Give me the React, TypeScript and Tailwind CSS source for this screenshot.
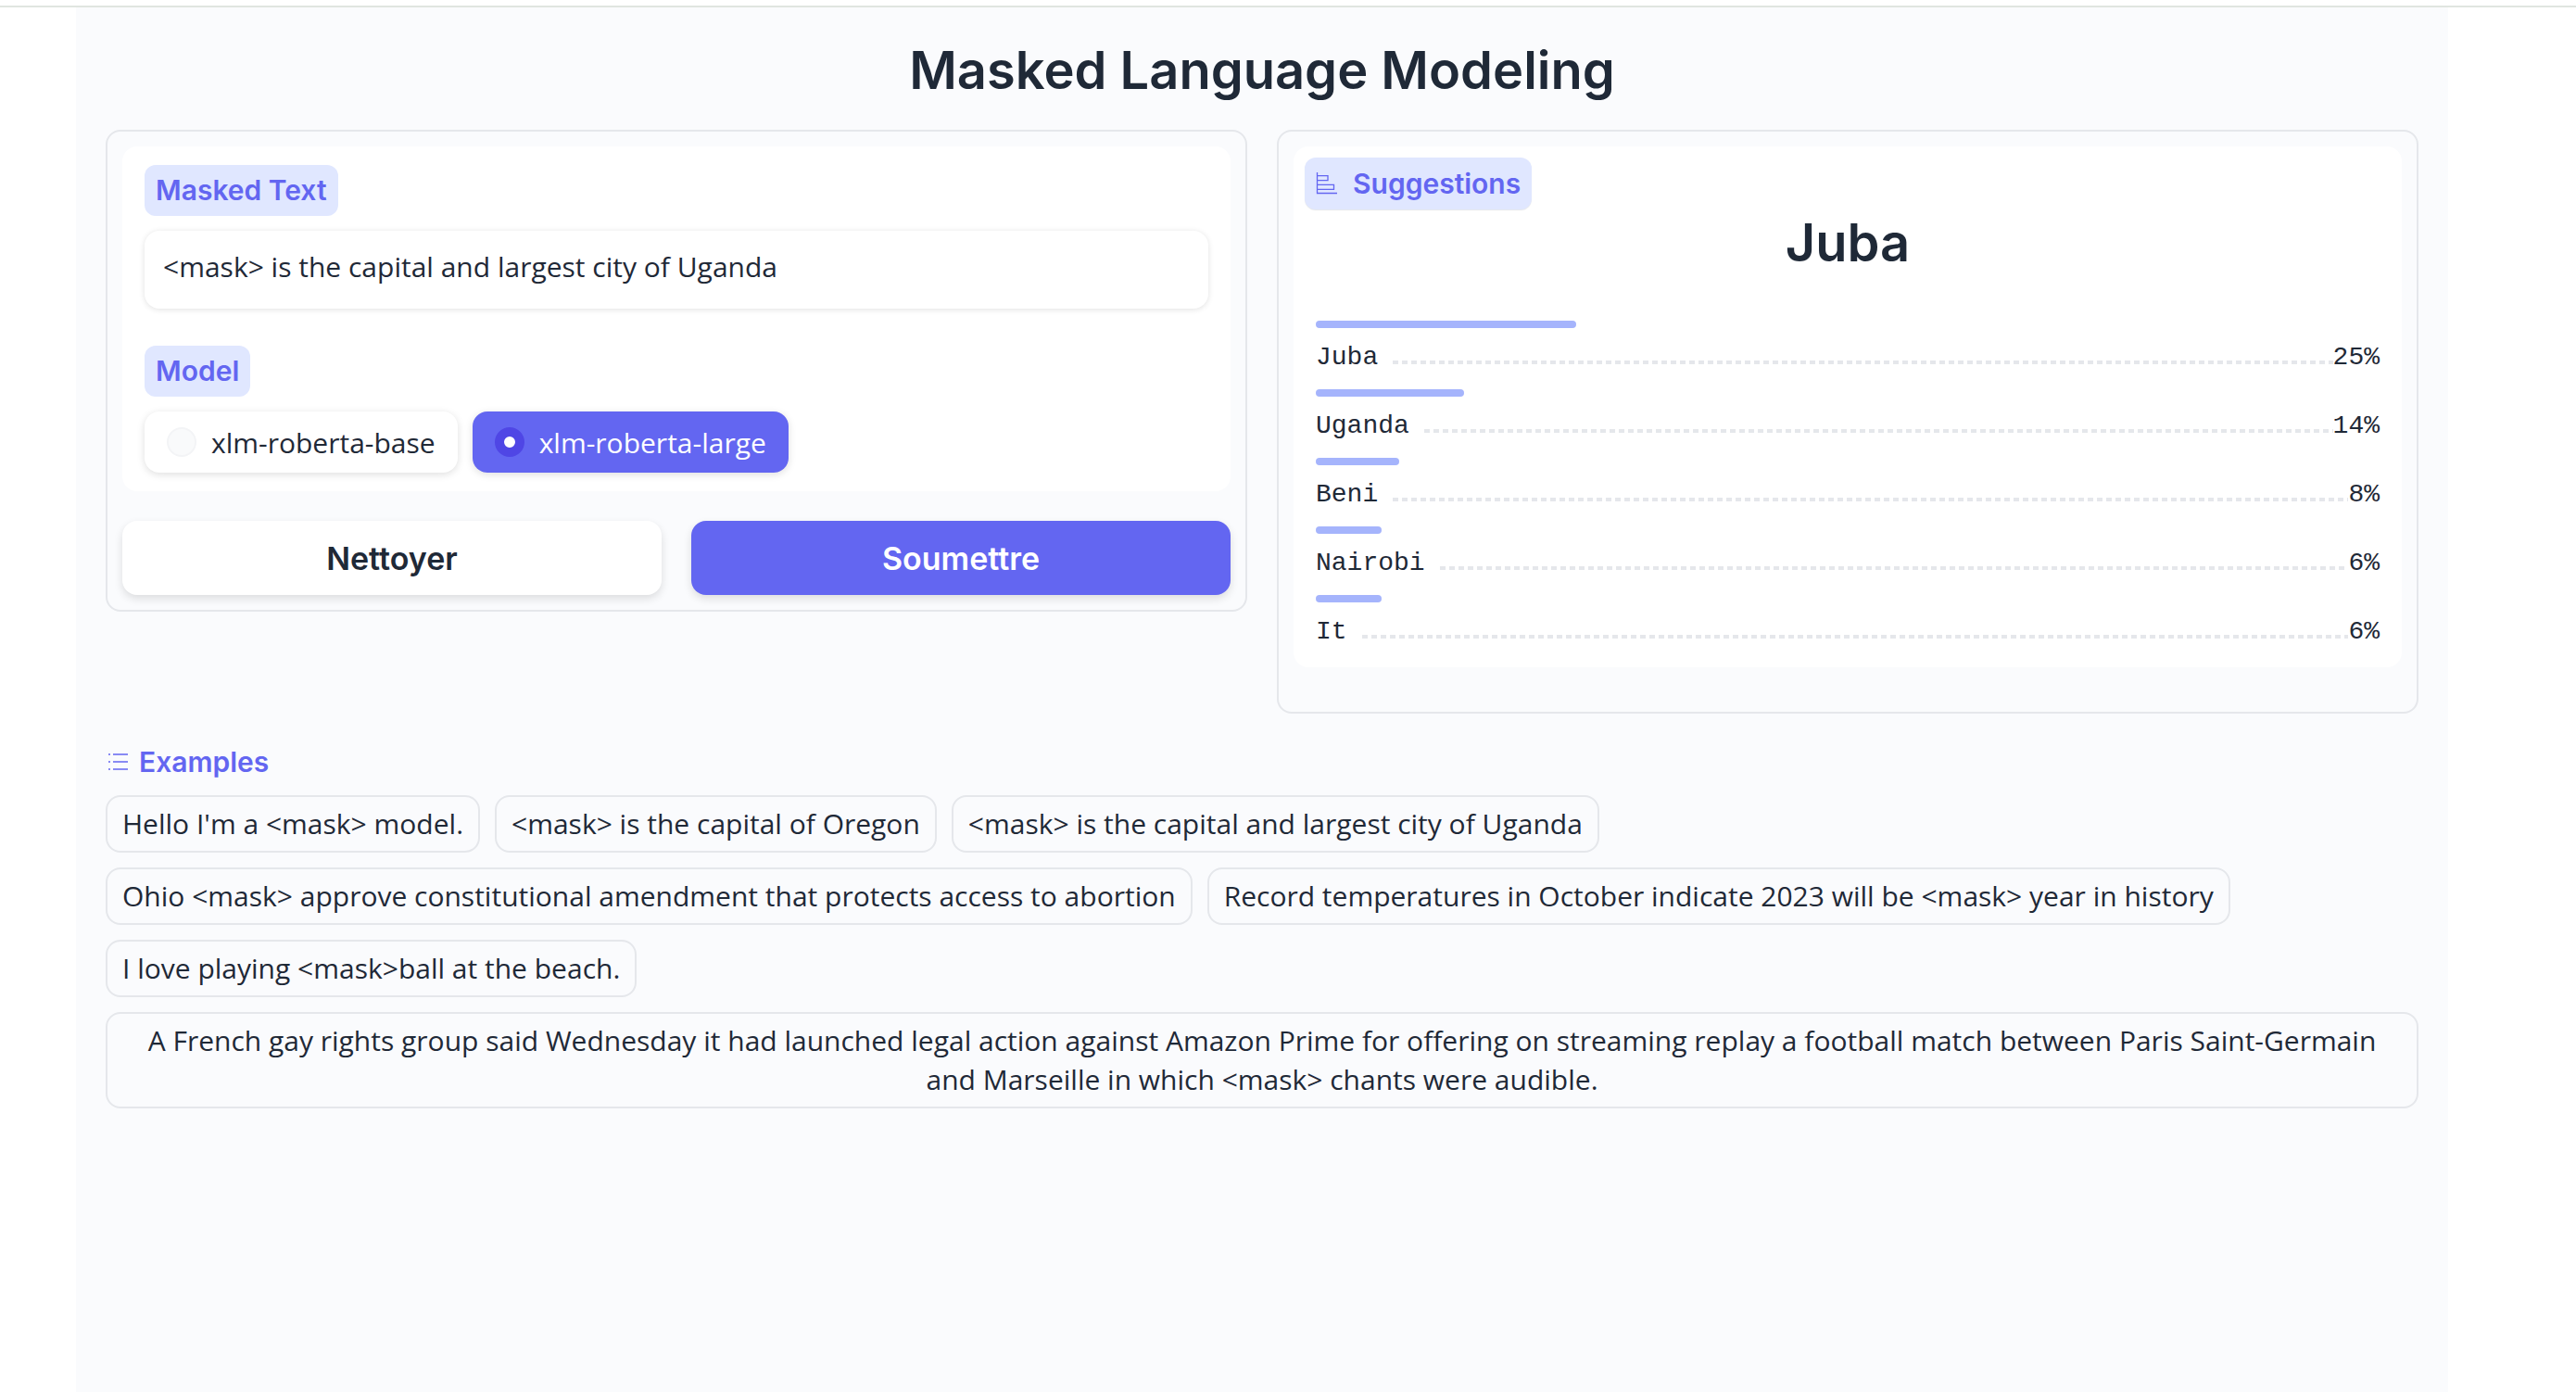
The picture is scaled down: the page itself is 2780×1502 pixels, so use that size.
import { useState } from 'react';

const suggestions = [
  { label: 'Juba', percent: 25, width: 24.5 },
  { label: 'Uganda', percent: 14, width: 13.9 },
  { label: 'Beni', percent: 8, width: 7.8 },
  { label: 'Nairobi', percent: 6, width: 6.2 },
  { label: 'It', percent: 6, width: 6.2 },
];

const examples = [
  "Hello I'm a <mask> model.",
  '<mask> is the capital of Oregon',
  '<mask> is the capital and largest city of Uganda',
  'Ohio <mask> approve constitutional amendment that protects access to abortion',
  'Record temperatures in October indicate 2023 will be <mask> year in history',
  'I love playing <mask>ball at the beach.',
  'A French gay rights group said Wednesday it had launched legal action against Amazon Prime for offering on streaming replay a football match between Paris Saint-Germain and Marseille in which <mask> chants were audible.',
];

const models = ['xlm-roberta-base', 'xlm-roberta-large'];

const badge = "inline-block rounded-xl bg-[#e0e7ff] px-3 py-1.5 font-['Inter',sans-serif] text-[30px] leading-[43px] font-semibold text-[#6366f1]";

function BarsIcon() {
  return (
    <svg className="h-6 w-6" viewBox="0 0 24 24" fill="none" stroke="currentColor" strokeWidth="1.3" aria-hidden="true">
      <path d="M1.5 0V22.5H23M1.5 3.7H13V8.7H1.5M1.5 13.3H19.5V18.3H1.5" />
    </svg>
  );
}

function ListIcon() {
  return (
    <svg className="h-6 w-6" viewBox="0 0 24 24" fill="none" stroke="currentColor" strokeWidth="1.6" aria-hidden="true">
      <path d="M3 4H5M8 4H24M3 12H5M8 12H24M3 20H5M8 20H24" />
    </svg>
  );
}

function InputPanel() {
  const [text, setText] = useState(examples[2]);
  const [model, setModel] = useState(models[1]);
  return (
    <section className="rounded-2xl border-2 border-gray-200 p-4">
      <div className="rounded-2xl bg-white px-6 py-5">
        <label htmlFor="masked-text" className={badge}>Masked Text</label>
        <input
          id="masked-text"
          value={text}
          onChange={(e) => setText(e.target.value)}
          className="mt-4 block h-[84px] w-full rounded-2xl bg-white px-5 pb-2 text-[30px] shadow-[0_1px_6px_rgba(0,0,0,0.12)] outline-none"
        />
        <fieldset className="mt-10">
          <legend className={badge}>Model</legend>
          <div className="mt-4 flex flex-wrap gap-4">
            {models.map((name) => (
              <label
                key={name}
                className={
                  name === model
                    ? 'flex h-[66px] items-center gap-4 rounded-2xl bg-[#6366f1] px-6 text-[30px] text-white shadow-[0_2px_8px_rgba(0,0,0,0.13)]'
                    : 'flex h-[66px] items-center gap-4 rounded-2xl bg-white px-6 text-[30px] shadow-[0_2px_8px_rgba(0,0,0,0.13)]'
                }
              >
                <input
                  type="radio"
                  name="model"
                  checked={name === model}
                  onChange={() => setModel(name)}
                  className="h-8 w-8 appearance-none rounded-full border-2 border-gray-100 bg-gray-50 checked:border-10 checked:border-[#4f46e5] checked:bg-white"
                />
                {name}
              </label>
            ))}
          </div>
        </fieldset>
      </div>
      <div className="mt-8 grid grid-cols-2 gap-8 font-['Inter',sans-serif] text-[34px] font-semibold">
        <button type="button" className="h-20 rounded-2xl bg-white shadow-[0_4px_10px_rgba(0,0,0,0.12)]">Nettoyer</button>
        <button type="button" className="h-20 rounded-2xl bg-[#6366f1] text-white shadow-[0_4px_10px_rgba(0,0,0,0.12)]">Soumettre</button>
      </div>
    </section>
  );
}

function SuggestionsPanel() {
  return (
    <section className="rounded-2xl border-2 border-gray-200 px-4 pt-4 pb-12">
      <div className="rounded-2xl bg-white px-6 pt-3 pb-1">
        <h2 className="-ml-3 inline-flex h-14 items-center gap-4 rounded-xl bg-[#e0e7ff] px-3 font-['Inter',sans-serif] text-[30px] font-semibold text-[#6366f1] shadow-[0_1px_1px_#e5e7eb]">
          <BarsIcon />
          Suggestions
        </h2>
        <p className="text-center font-['Inter',sans-serif] text-[56px] leading-[72px] font-semibold">Juba</p>
        <ul className="mt-12 font-['Liberation_Mono',monospace] text-[28px]">
          {suggestions.map((s) => (
            <li key={s.label} className="h-[74px]">
              <div className="h-2 rounded bg-[#a5b4fc]" style={{ width: `${s.width}%` }} />
              <div className="mt-1 flex items-baseline leading-[56px]">
                <span>{s.label}</span>
                <span className="ml-4 h-1 flex-1 bg-[repeating-linear-gradient(90deg,#e5e7eb_0_6px,transparent_6px_10px)]" />
                <span>{s.percent}%</span>
              </div>
            </li>
          ))}
        </ul>
      </div>
    </section>
  );
}

export default function App() {
  return (
    <div className="flex min-h-screen flex-col bg-white font-['Open_Sans',sans-serif] text-[#1f2937]">
      <div className="mt-1.5 h-0.5 bg-[#e0e5e0]" />
      <div className="flex flex-1 flex-col pr-14">
        <main className="mx-auto w-full max-w-[2560px] flex-1 bg-[#fafbfd] px-8">
          <h1 className="pt-8 pb-7 text-center font-['Inter',sans-serif] text-[56px] leading-[72px] font-semibold">Masked Language Modeling</h1>
          <div className="grid grid-cols-2 items-start gap-8">
            <InputPanel />
            <SuggestionsPanel />
          </div>
          <h2 className="mt-8 flex items-center gap-3 font-['Inter',sans-serif] text-[30px] leading-10 font-semibold text-[#6366f1]">
            <ListIcon />
            Examples
          </h2>
          <div className="mt-4 flex flex-wrap gap-4">
            {examples.map((text) => (
              <button key={text} type="button" className="rounded-2xl border-2 border-gray-200 px-4 py-2 text-center text-[30px] leading-[42px]">
                {text}
              </button>
            ))}
          </div>
        </main>
      </div>
    </div>
  );
}
